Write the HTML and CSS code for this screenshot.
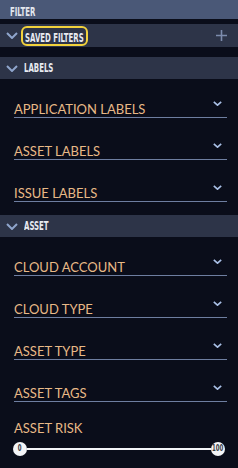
FILE: index.html
```html
<!DOCTYPE html>
<html>
<head>
<meta charset="utf-8">
<link rel="stylesheet" href="styles.css">
</head>
<body>
<div class="panel">
  <div class="title"><span class="cond">FILTER</span></div>
  <div class="head head-saved">
    <svg class="caret" width="12" height="7" viewBox="0 0 12 7"><path d="M1 1 L6 6 L11 1" fill="none" stroke="#8fa5cc" stroke-width="2"/></svg>
    <span class="saved-box"><span class="cond">SAVED FILTERS</span></span>
    <svg class="plus" width="11" height="11" viewBox="0 0 11 11"><path d="M5.5 0 V11 M0 5.5 H11" stroke="#7d8cad" stroke-width="1.6"/></svg>
  </div>
  <div class="head head-labels">
    <svg class="caret" width="12" height="7" viewBox="0 0 12 7"><path d="M1 1 L6 6 L11 1" fill="none" stroke="#8fa5cc" stroke-width="2"/></svg>
    <span class="head-text cond">LABELS</span>
  </div>
  <div class="fields">
    <div class="field"><span>APPLICATION LABELS</span><svg class="fcaret" width="9" height="5" viewBox="0 0 9 5"><path d="M0.8 0.8 L4.5 4.2 L8.2 0.8" fill="none" stroke="#a9bfe6" stroke-width="1.6"/></svg></div>
    <div class="field"><span>ASSET LABELS</span><svg class="fcaret" width="9" height="5" viewBox="0 0 9 5"><path d="M0.8 0.8 L4.5 4.2 L8.2 0.8" fill="none" stroke="#a9bfe6" stroke-width="1.6"/></svg></div>
    <div class="field"><span>ISSUE LABELS</span><svg class="fcaret" width="9" height="5" viewBox="0 0 9 5"><path d="M0.8 0.8 L4.5 4.2 L8.2 0.8" fill="none" stroke="#a9bfe6" stroke-width="1.6"/></svg></div>
  </div>
  <div class="head">
    <svg class="caret" width="12" height="7" viewBox="0 0 12 7"><path d="M1 1 L6 6 L11 1" fill="none" stroke="#8fa5cc" stroke-width="2"/></svg>
    <span class="head-text cond">ASSET</span>
  </div>
  <div class="fields">
    <div class="field"><span>CLOUD ACCOUNT</span><svg class="fcaret" width="9" height="5" viewBox="0 0 9 5"><path d="M0.8 0.8 L4.5 4.2 L8.2 0.8" fill="none" stroke="#a9bfe6" stroke-width="1.6"/></svg></div>
    <div class="field"><span>CLOUD TYPE</span><svg class="fcaret" width="9" height="5" viewBox="0 0 9 5"><path d="M0.8 0.8 L4.5 4.2 L8.2 0.8" fill="none" stroke="#a9bfe6" stroke-width="1.6"/></svg></div>
    <div class="field"><span>ASSET TYPE</span><svg class="fcaret" width="9" height="5" viewBox="0 0 9 5"><path d="M0.8 0.8 L4.5 4.2 L8.2 0.8" fill="none" stroke="#a9bfe6" stroke-width="1.6"/></svg></div>
    <div class="field"><span>ASSET TAGS</span><svg class="fcaret" width="9" height="5" viewBox="0 0 9 5"><path d="M0.8 0.8 L4.5 4.2 L8.2 0.8" fill="none" stroke="#a9bfe6" stroke-width="1.6"/></svg></div>
    <div class="risk">ASSET RISK</div>
    <div class="slider">
      <div class="thumb"><span class="tnum">0</span></div>
      <div class="track"></div>
      <div class="thumb"><span class="tnum">100</span></div>
    </div>
  </div>
</div>
</body>
</html>
```
FILE: styles.css
```css
html, body {
  margin: 0;
  padding: 0;
  background: #0a0d1a;
}
.panel {
  width: 238px;
  height: 468px;
  background: #0a0d1a;
  overflow: hidden;
}
.cond {
  display: inline-block;
  font-family: "DejaVu Sans Condensed", "DejaVu Sans", sans-serif;
  font-size: 12.5px;
  font-weight: bold;
  transform: scaleX(0.62);
  transform-origin: left center;
  white-space: nowrap;
}
.title {
  height: 19px;
  line-height: 21px;
  background: #4a5877;
  color: #e3e7ee;
  padding-left: 10px;
  margin-bottom: 5px;
}
.head {
  height: 22px;
  background: #2d3448;
  display: flex;
  align-items: center;
  padding-left: 6px;
  color: #e8ebf1;
}
.head-saved {
  height: 23px;
  margin-bottom: 10px;
}
.caret {
  display: block;
  margin-right: 6px;
  flex: none;
}
.saved-box {
  border: 2px solid #f2d23c;
  border-radius: 6px;
  padding: 0 3px 0 2px;
  width: 58px;
  height: 16px;
  line-height: 17px;
  margin-left: -3px;
  flex: none;
}
.plus {
  margin-left: auto;
  margin-right: 11px;
  display: block;
}
.head-text {
  line-height: 22px;
}
.fields {
  padding: 22px 11px 13px 14px;
}
.field {
  display: flex;
  justify-content: space-between;
  align-items: flex-start;
  border-bottom: 1px solid #6e7ea0;
  height: 16px;
  font-family: Lato, sans-serif;
  font-size: 13px;
  line-height: 16px;
  color: #e8b987;
  white-space: nowrap;
}
.field + .field {
  margin-top: 25px;
}
.fcaret {
  display: block;
  margin-right: 5px;
  flex: none;
}
.risk {
  margin-top: 18px;
  font-family: Lato, sans-serif;
  font-size: 13px;
  line-height: 16px;
  color: #e8b987;
}
.slider {
  display: flex;
  align-items: center;
  margin-top: 6px;
  margin-left: -1px;
  width: 212px;
}
.track {
  flex: 1;
  height: 2px;
  background: #f4f5f8;
}
.thumb {
  width: 14px;
  height: 14px;
  border-radius: 50%;
  background: #f4f5f8;
  display: flex;
  align-items: center;
  justify-content: center;
  flex: none;
}
.tnum {
  font-family: "DejaVu Sans Condensed", sans-serif;
  font-size: 8px;
  font-weight: bold;
  color: #3a3d46;
  display: inline-block;
  transform: scaleX(0.75);
  line-height: 10px;
}
```
